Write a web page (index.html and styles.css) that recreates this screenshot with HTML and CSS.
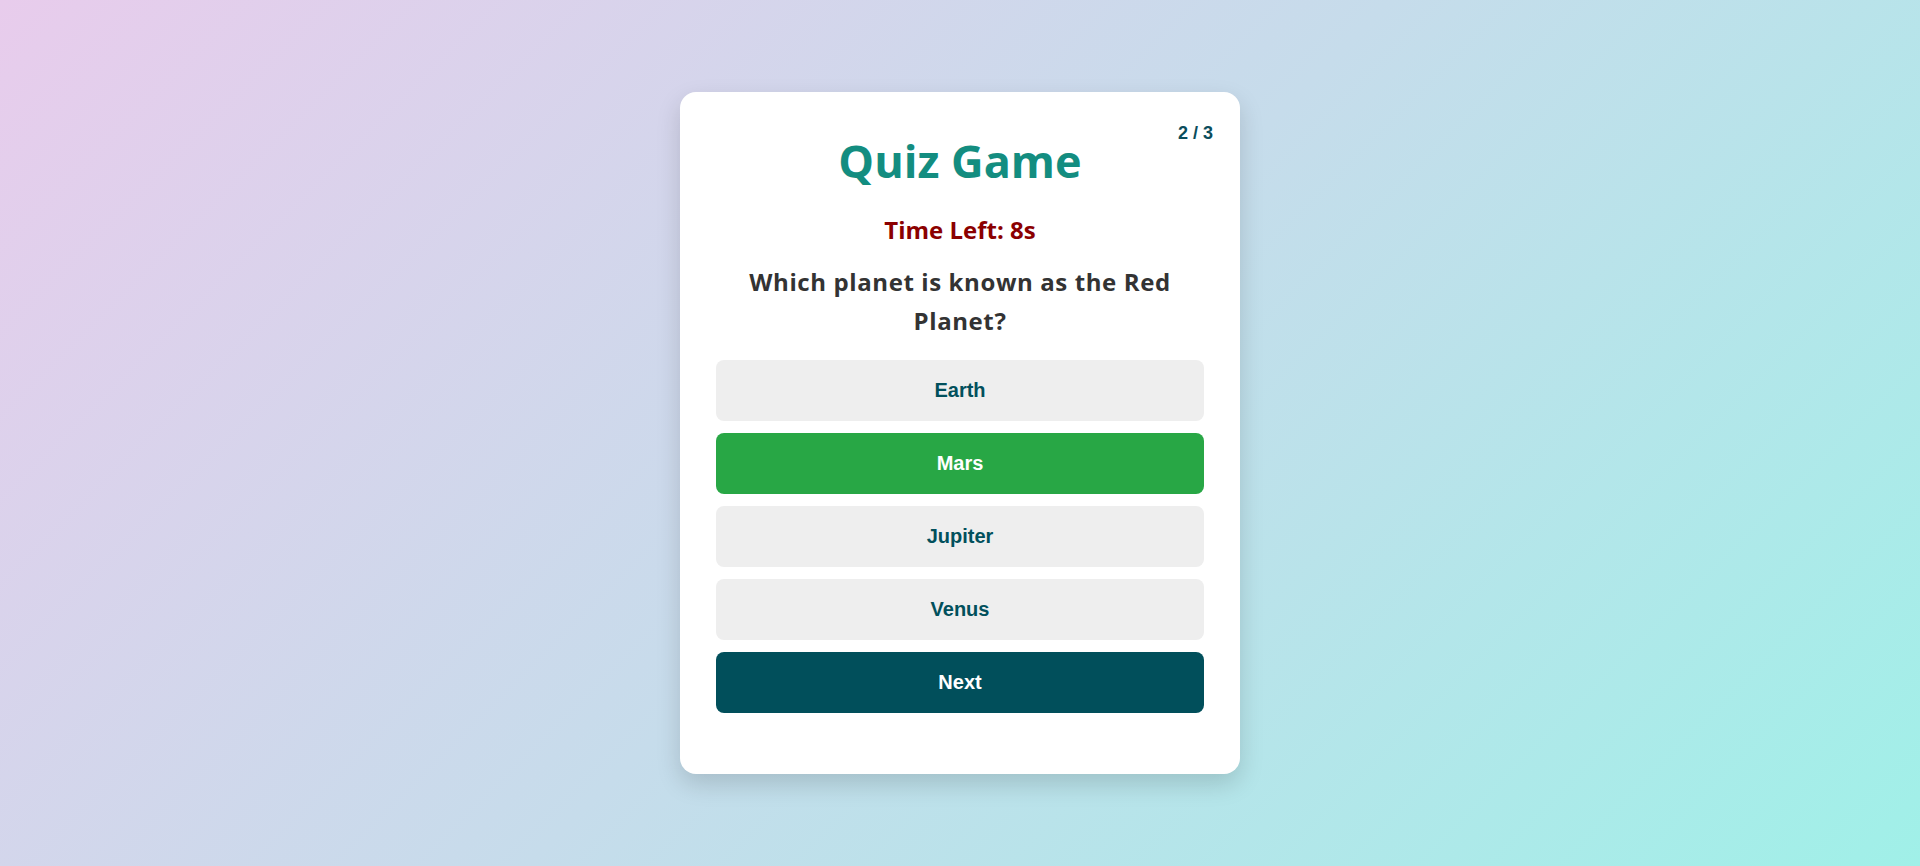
FILE: index.html
```html
<!DOCTYPE html>
<html lang="en">
<head>
<meta charset="utf-8">
<title>Quiz Game</title>
<link rel="stylesheet" href="styles.css">
</head>
<body>
  <main class="card">
    <div class="counter">2 / 3</div>
    <h1 class="title">Quiz Game</h1>
    <div class="timer">Time Left: 8s</div>
    <h2 class="question">Which planet is known as the Red Planet?</h2>
    <div class="options">
      <button class="option">Earth</button>
      <button class="option correct">Mars</button>
      <button class="option">Jupiter</button>
      <button class="option">Venus</button>
      <button class="option next">Next</button>
    </div>
  </main>
</body>
</html>
```

FILE: styles.css
```css
* { box-sizing: border-box; }

html, body {
  margin: 0;
  padding: 0;
}

body {
  min-height: 100vh;
  display: flex;
  align-items: center;
  justify-content: center;
  background: linear-gradient(135deg, #e8ccec 0%, #c6dceb 50%, #a0f0e8 100%);
  font-family: "Liberation Sans", Arial, sans-serif;
}

.card {
  position: relative;
  width: 560px;
  background: #ffffff;
  border-radius: 16px;
  padding: 42px 36px 61px;
  box-shadow: 0 10px 25px rgba(0, 0, 0, 0.15);
  text-align: center;
}

.counter {
  position: absolute;
  top: 31px;
  right: 27px;
  font-family: "Liberation Sans", Arial, sans-serif;
  font-weight: 700;
  font-size: 18px;
  line-height: 21px;
  color: #0b4d5c;
}

.title {
  margin: 0 0 28px;
  font-family: "Open Sans", sans-serif;
  font-weight: 700;
  font-size: 45px;
  line-height: 54px;
  color: #138d80;
}

.timer {
  margin: 0 0 19px;
  font-family: "Open Sans", sans-serif;
  font-weight: 700;
  font-size: 24px;
  line-height: 28.8px;
  color: #8b0000;
}

.question {
  margin: 0 0 20px;
  padding: 0 4px;
  font-family: "Open Sans", sans-serif;
  font-weight: 700;
  font-size: 24px;
  line-height: 38.4px;
  letter-spacing: 0.6px;
  color: #333333;
}

.options {
  display: flex;
  flex-direction: column;
  gap: 12px;
}

.option {
  display: block;
  width: 100%;
  height: 61px;
  border: none;
  border-radius: 8px;
  background: #eeeeee;
  color: #01505c;
  font-family: "Liberation Sans", Arial, sans-serif;
  font-weight: 700;
  font-size: 20px;
  line-height: 23px;
  cursor: pointer;
}

.option.correct {
  background: #28a745;
  color: #ffffff;
}

.option.next {
  background: #014f5b;
  color: #ffffff;
}
```
